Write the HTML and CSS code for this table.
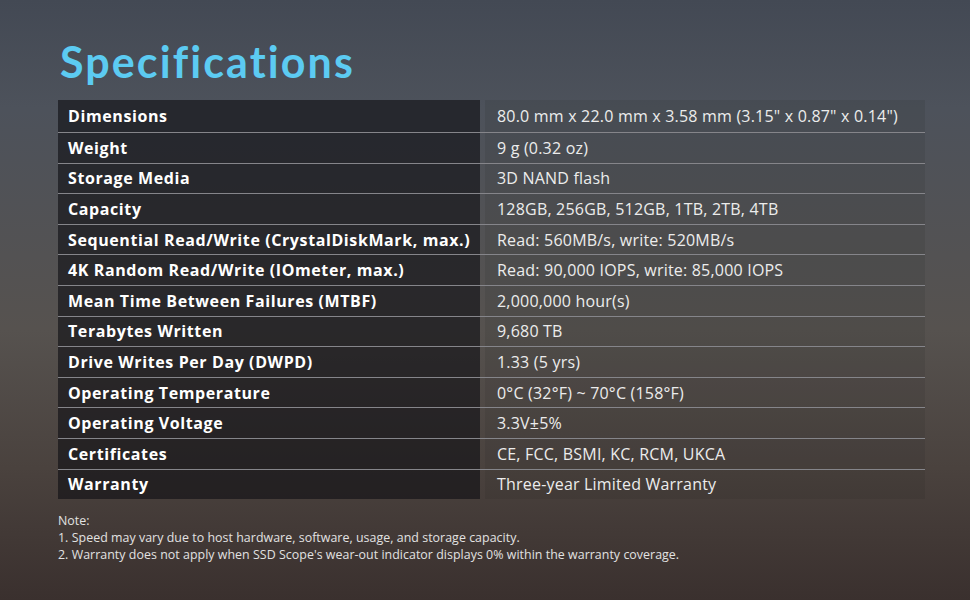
FILE: index.html
```html
<!DOCTYPE html>
<html>
<head>
<meta charset="utf-8">
<link rel="stylesheet" href="styles.css">
</head>
<body>
<div class="page">
  <h1 class="title">Specifications</h1>
  <div class="specs">
    <div class="row"><div class="key">Dimensions</div><div class="val">80.0 mm x 22.0 mm x 3.58 mm (3.15" x 0.87" x 0.14")</div></div>
    <div class="row"><div class="key">Weight</div><div class="val">9 g (0.32 oz)</div></div>
    <div class="row"><div class="key">Storage Media</div><div class="val">3D NAND flash</div></div>
    <div class="row"><div class="key">Capacity</div><div class="val">128GB, 256GB, 512GB, 1TB, 2TB, 4TB</div></div>
    <div class="row"><div class="key">Sequential Read/Write (CrystalDiskMark, max.)</div><div class="val">Read: 560MB/s, write: 520MB/s</div></div>
    <div class="row"><div class="key">4K Random Read/Write (IOmeter, max.)</div><div class="val">Read: 90,000 IOPS, write: 85,000 IOPS</div></div>
    <div class="row"><div class="key">Mean Time Between Failures (MTBF)</div><div class="val">2,000,000 hour(s)</div></div>
    <div class="row"><div class="key">Terabytes Written</div><div class="val">9,680 TB</div></div>
    <div class="row"><div class="key">Drive Writes Per Day (DWPD)</div><div class="val">1.33 (5 yrs)</div></div>
    <div class="row"><div class="key">Operating Temperature</div><div class="val">0°C (32°F) ~ 70°C (158°F)</div></div>
    <div class="row"><div class="key">Operating Voltage</div><div class="val">3.3V±5%</div></div>
    <div class="row"><div class="key">Certificates</div><div class="val">CE, FCC, BSMI, KC, RCM, UKCA</div></div>
    <div class="row"><div class="key">Warranty</div><div class="val">Three-year Limited Warranty</div></div>
  </div>
  <div class="notes">
    <p>Note:</p>
    <p>1. Speed may vary due to host hardware, software, usage, and storage capacity.</p>
    <p>2. Warranty does not apply when SSD Scope's wear-out indicator displays 0% within the warranty coverage.</p>
  </div>
</div>
</body>
</html>
```
FILE: styles.css
```css
html, body {
  margin: 0;
  padding: 0;
}
body {
  width: 970px;
  height: 600px;
  overflow: hidden;
  background: linear-gradient(to bottom, #434954 0%, #4d525b 18%, #56524f 55%, #4a423e 78%, #3a302e 100%);
  font-family: "Open Sans", "Noto Sans", sans-serif;
}
.page {
  padding: 34px 45px 0 58px;
  display: flex;
  flex-direction: column;
}
.title {
  margin: 0 0 0 2px;
  font-family: Lato, sans-serif;
  font-weight: 700;
  font-size: 43px;
  line-height: 56px;
  height: 66px;
  color: #5ccbf2;
  letter-spacing: 2.1px;
}
.specs {
  display: flex;
  flex-direction: column;
  width: 867px;
}
.row {
  display: flex;
  gap: 5px;
  height: 30.6px;
  box-sizing: border-box;
  border-top: 1px solid #85858a;
}
.row:first-child {
  border-top: none;
  height: 32px;
}
.key {
  width: 422px;
  box-sizing: border-box;
  padding-left: 10px;
  background: rgba(14, 14, 20, 0.62);
  color: #ffffff;
  font-weight: 700;
  font-size: 16px;
  display: flex;
  align-items: center;
  letter-spacing: 0.6px;
}
.val {
  flex: 1;
  box-sizing: border-box;
  padding-left: 12px;
  background: rgba(30, 30, 34, 0.12);
  color: #ececec;
  font-size: 16px;
  display: flex;
  align-items: center;
  letter-spacing: 0.2px;
}
.notes {
  margin-top: 13px;
  color: #e2e2e2;
  font-size: 12.4px;
  line-height: 17px;
  letter-spacing: 0.04px;
}
.notes p {
  margin: 0;
}
```
